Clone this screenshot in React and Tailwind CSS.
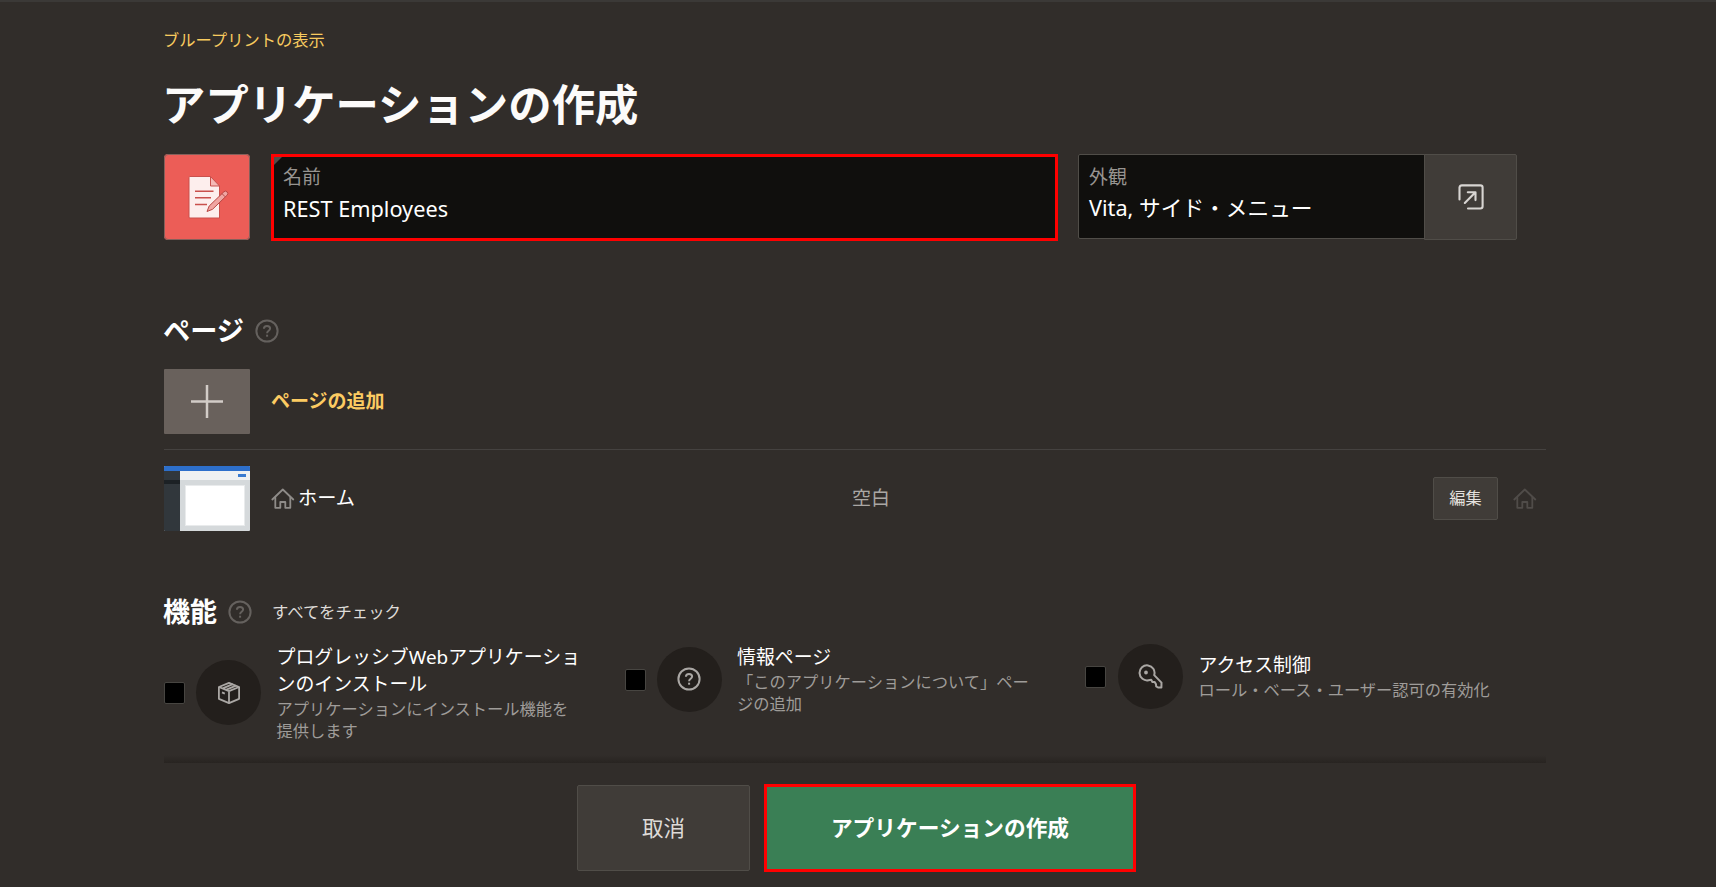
const HomeIcon = ({ className }) => (
  <svg className={className} width="24" height="22" viewBox="0 0 24 22" fill="none" stroke="currentColor" strokeWidth="1.8" strokeLinejoin="round" strokeLinecap="round">
    <path d="M1.3 11.5 11.8 1.5 22.3 11.5" />
    <path d="M4.3 9.5v10.3h5v-5.8h5v5.8h5V9.5" />
  </svg>
);

const HelpIcon = ({ className }) => (
  <svg className={className} width="24" height="24" viewBox="0 0 24 24" fill="none" stroke="currentColor" strokeWidth="2">
    <circle cx="12" cy="12" r="10.6" />
    <path d="M8.9 9.7c0-1.7 1.3-2.8 3.1-2.8s3.1 1.1 3.1 2.6c0 2.4-3 2.2-3 4.7" />
    <path d="M12.1 15.7v2" />
  </svg>
);

const PackageIcon = () => (
  <svg width="24" height="24" viewBox="0 0 24 24" fill="none" stroke="currentColor" strokeWidth="1.8" strokeLinejoin="round">
    <path d="M12 1.8 22.1 6v11.8L12 22.2 1.9 17.8V6z" />
    <path d="M1.9 6 12 10.2 22.1 6M12 10.2v12M5.7 7.4l10.2-4.2M8.9 8.9 19 4.7M5 11.4l2.8 1.2" />
  </svg>
);

const KeyIcon = () => (
  <svg width="25" height="25" viewBox="0 0 25 25" fill="none" stroke="currentColor" strokeWidth="2" strokeLinejoin="round">
    <path d="M16.2 11.1A7.5 7.5 0 1 0 10.6 16.2L13.2 15.8 14.4 18 16.7 18 18 20.3 18.2 22.4 20 23.5 23.4 23.5 23.5 18.6z" />
    <circle cx="8" cy="8.5" r="0.9" fill="currentColor" />
  </svg>
);

const PopupIcon = () => (
  <svg width="26" height="26" viewBox="0 0 26 26" fill="none" stroke="currentColor" strokeWidth="2.1" strokeLinecap="round" strokeLinejoin="round">
    <path d="M1.5 15.5V3.5a2.5 2.5 0 0 1 2.5-2.1h18.4a2.2 2.2 0 0 1 2.2 2.2v18.7a2.2 2.2 0 0 1-2.2 2.2H10" />
    <path d="M6.8 18.9 17.4 8.3M9.8 8.2h7.7v7.9" />
  </svg>
);

const AppIcon = () => (
  <svg width="86" height="86" viewBox="0 0 86 86" fill="none">
    <path d="M26 22.5h20.5l9 9.5v32H26a1 1 0 0 1-1-1V23.5a1 1 0 0 1 1-1z" fill="#fdeeed" stroke="#c9504c" />
    <path d="M46.5 22.5v9.5h9z" fill="#f5b9b6" stroke="#c9504c" strokeLinejoin="round" />
    <path d="M31 37.3h18.5M31 43.8h16M31 50.5h12" stroke="#c9504c" strokeWidth="1.6" />
    <path d="m43 57.5 2.2-5.500L59.800 37.900a2.200 2.200 0 0 1 3.300 3.300L48.500 55.300z" fill="#f0a5a2" stroke="#b94743" strokeLinejoin="round" />
    <path d="m58 39.600 3.200 3.200" stroke="#b94743" />
  </svg>
);

const PageThumb = () => (
  <div className="flex h-[65px] w-[86px] flex-col overflow-hidden rounded-[1px] bg-[#d5d9db]">
    <div className="h-[5px] bg-[#2d6fcb]" />
    <div className="flex flex-1">
      <div className="w-4 bg-[#31373c] pt-[9px]">
        <div className="h-[4px] bg-[#1c2125]" />
      </div>
      <div className="flex flex-1 flex-col">
        <div className="flex h-[9px] items-center justify-end bg-[#eff1f2] pr-1">
          <div className="h-[3px] w-2 bg-[#3a7bd0]" />
        </div>
        <div className="mx-[5px] mt-[5px] h-[41px] border border-[#e9ebec] bg-white" />
      </div>
    </div>
  </div>
);

function Feature({ icon, title, text, controlOffset, textOffset, gap }) {
  return (
    <div className="flex w-[460.5px] items-start">
      <div className={`flex items-center ${controlOffset}`}>
        <div className="h-[22px] w-[21px] rounded-[2px] border-[1.5px] border-[#474541] bg-black" />
        <div className={`${gap} flex size-[65px] items-center justify-center rounded-full bg-[#231f1c] text-[#aaa7a4]`}>{icon}</div>
      </div>
      <div className={`ml-[15.5px] w-[306px] ${textOffset}`}>
        <div className="text-[18.9px] leading-[27px] text-white">{title}</div>
        <div className="text-[16.25px] leading-[22px] text-[#9f9c99]">{text}</div>
      </div>
    </div>
  );
}

export default function App() {
  return (
    <div className="h-[887px] w-[1716px] overflow-hidden border-t-2 border-[#3b3937] bg-[#312d2a] font-['Noto_Sans','Noto_Sans_CJK_JP',sans-serif] text-white" lang="ja">
      <main className="ml-[164px] w-[1382px] pt-[26px]">
        <a className="-ml-px block h-6 text-[16.3px] leading-6 text-[#f8cb5f]">ブループリントの表示</a>
        <h1 className="mt-[23px] -ml-[2px] h-[60px] text-[43.4px] leading-[60px] font-bold text-[#fcfbfa]">アプリケーションの作成</h1>

        <section className="mt-[19px] flex h-[87px] items-start">
          <div className="size-[86px] overflow-hidden rounded-[4px] bg-[#ec5d57] outline outline-1 -outline-offset-1 outline-[#85605b]"><AppIcon /></div>
          <div className="relative ml-[21px] h-[87px] w-[787px] border-[3px] border-[#ff0000] bg-[#100f0d] px-[9px] pt-[7px]">
            <svg className="absolute top-0 left-0" width="8" height="8"><path d="M0 0h8L0 8z" fill="#504d49" /></svg>
            <div className="text-[19px] leading-[26px] text-[#979490]">名前</div>
            <div className="mt-[3px] text-[21.7px] leading-8">REST Employees</div>
          </div>
          <div className="ml-5 h-[85px] w-[347px] rounded-l-[2px] border border-[#504d48] bg-[#100f0d] px-2.5 pt-[9px]">
            <div className="text-[19px] leading-[26px] text-[#979490]">外観</div>
            <div className="mt-[2px] text-[21.7px] leading-8">Vita, サイド・メニュー</div>
          </div>
          <button className="-ml-px flex h-[86px] w-[93px] items-center justify-center rounded-r-[2px] border border-[#504d48] bg-[#403c38] text-[#d8d5d2]"><PopupIcon /></button>
        </section>

        <section className="mt-[75px]">
          <div className="flex h-[30px] items-center">
            <h2 className="-ml-px w-[92px] text-[27.2px] leading-[30px] font-bold">ページ</h2>
            <HelpIcon className="-mt-px text-[#65615e]" />
          </div>
          <div className="mt-[23px] flex h-[65px] items-center">
            <div className="flex h-[65px] w-[86px] items-center justify-center rounded-[1px] bg-[#69615c]">
              <svg width="32" height="33" viewBox="0 0 32 33" stroke="#d2ccc7" strokeWidth="2.5"><path d="M16 0v33M0 16.5h32" /></svg>
            </div>
            <a className="-mt-0.5 ml-[21px] text-[19px] leading-7 font-bold text-[#fccb62]">ページの追加</a>
          </div>
          <div className="mt-[15px] flex h-[82px] items-center border-t border-[#454240] pt-4">
            <PageThumb />
            <HomeIcon className="ml-[21px] text-[#8f8c89]" />
            <span className="-mt-0.5 ml-[3px] w-[554px] text-[19.2px] leading-7">ホーム</span>
            <span className="-mt-0.5 text-[19px] leading-7 text-[#aaa7a4]">空白</span>
            <button className="ml-auto h-[43px] w-[65px] rounded-[2px] border border-[#504d48] bg-[#403c38] text-[16.2px] text-[#e5e2df]">編集</button>
            <HomeIcon className="mr-[9px] ml-[15px] text-[#504c49]" />
          </div>
        </section>

        <section className="mt-[66px]">
          <div className="flex h-[30px] items-center">
            <h2 className="-ml-px w-[65px] text-[27px] leading-[30px] font-bold">機能</h2>
            <HelpIcon className="-mt-px text-[#65615e]" />
            <span className="ml-5 text-[16.4px] text-[#dedbd8]">すべてをチェック</span>
          </div>
          <div className="mt-[15px] flex h-[113px]">
            <Feature icon={<PackageIcon />} gap="ml-[11px]" controlOffset="mt-[18px]" textOffset="mt-[2px]" title="プログレッシブWebアプリケーションのインストール" text="アプリケーションにインストール機能を提供します" />
            <Feature icon={<HelpIcon className="-mt-[2px]" />} gap="ml-[11px]" controlOffset="mt-[5px]" textOffset="mt-[2px]" title="情報ページ" text="「このアプリケーションについて」ページの追加" />
            <Feature icon={<KeyIcon />} gap="ml-3" controlOffset="mt-[2px]" textOffset="mt-2.5" title="アクセス制御" text="ロール・ベース・ユーザー認可の有効化" />
          </div>
          <div className="h-2 bg-linear-to-b from-[#312d2a] to-[#282421]" />
        </section>
      </main>

      <footer className="flex items-center pt-[21px] pl-[577px]">
        <button className="h-[86px] w-[173px] rounded-[2px] border border-[#504d48] bg-[#403c38] text-[21.5px] text-[#dedbd8]">取消</button>
        <button className="ml-3.5 h-[88px] w-[372px] border-[3px] border-[#ff0000] bg-[#3a7f55] text-[21.7px] font-bold">アプリケーションの作成</button>
      </footer>
    </div>
  );
}
